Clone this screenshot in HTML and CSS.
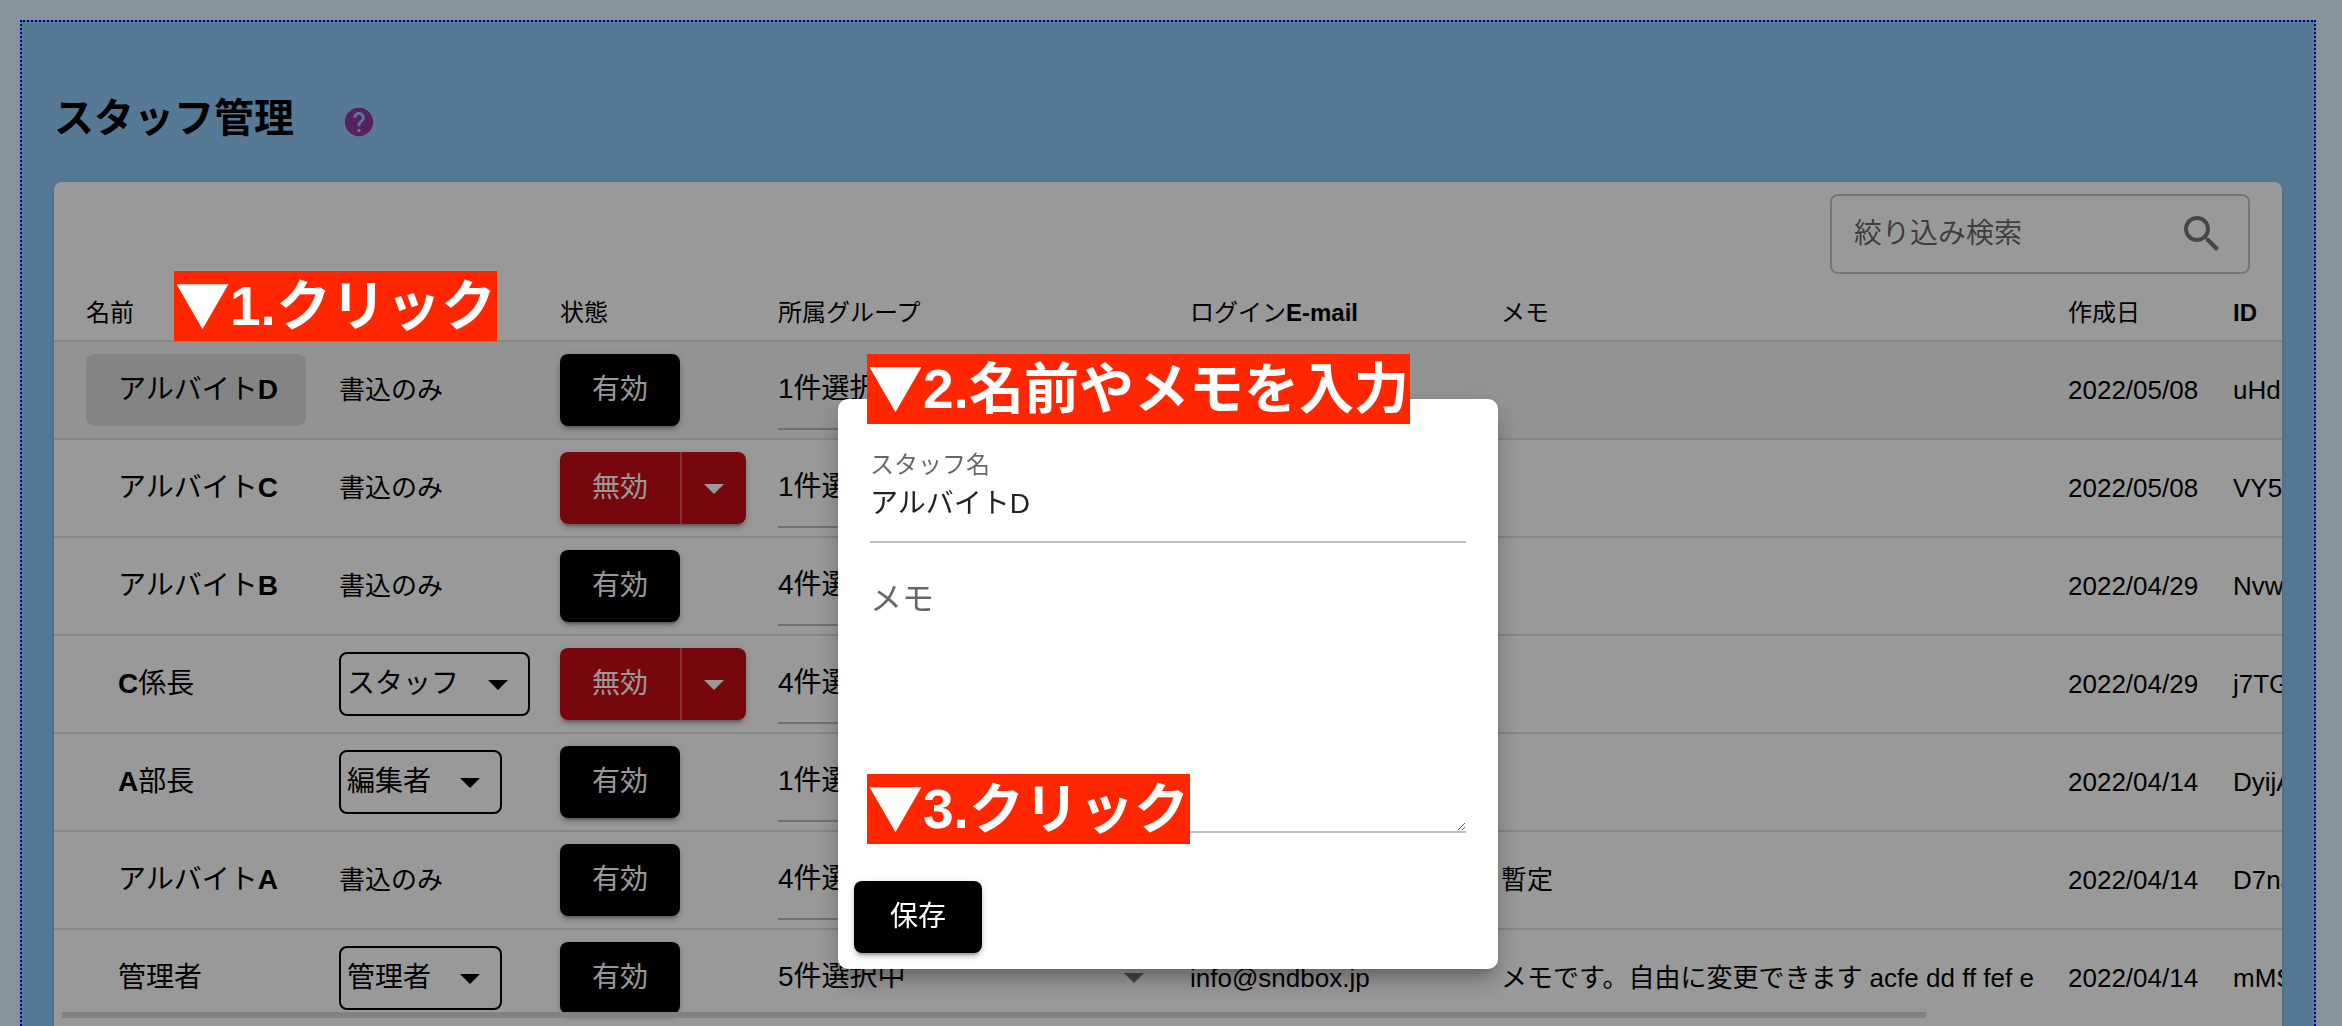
FILE: index.html
```html
<!DOCTYPE html>
<html lang="ja">
<head>
<meta charset="utf-8">
<title>スタッフ管理</title>
<link rel="stylesheet" href="styles.css">
</head>
<body>
<div class="app">
  <main class="frame">
    <header class="page-head">
      <h1 class="page-title">スタッフ管理</h1>
      <a class="help" href="#help" aria-label="ヘルプ">
        <svg class="help-icon" viewBox="0 0 24 24"><path d="M12 2C6.48 2 2 6.48 2 12s4.48 10 10 10 10-4.48 10-10S17.52 2 12 2zm1 17h-2v-2h2v2zm2.07-7.75-.9.92C13.45 12.9 13 13.5 13 15h-2v-.5c0-1.1.45-2.1 1.17-2.83l1.24-1.26c.37-.36.59-.86.59-1.41 0-1.1-.9-2-2-2s-2 .9-2 2H8c0-2.21 1.79-4 4-4s4 1.79 4 4c0 .88-.36 1.68-.93 2.25z"/></svg>
      </a>
    </header>

    <section class="paper">
      <div class="toolbar">
        <label class="search">
          <input class="search-input" type="text" placeholder="絞り込み検索" aria-label="絞り込み検索">
          <svg class="icon" viewBox="0 0 24 24"><path d="M15.5 14h-.79l-.28-.27C15.41 12.59 16 11.11 16 9.5 16 5.91 13.09 3 9.5 3S3 5.91 3 9.5 5.91 16 9.5 16c1.61 0 3.09-.59 4.23-1.57l.27.28v.79l5 4.99L20.49 19l-4.99-5zm-6 0C7.01 14 5 11.99 5 9.5S7.01 5 9.5 5 14 7.01 14 9.5 11.99 14 9.5 14z"/></svg>
        </label>
      </div>

      <table class="staff">
        <colgroup>
          <col class="c-name"><col class="c-role"><col class="c-state"><col class="c-group"><col class="c-mail"><col class="c-memo"><col class="c-date"><col class="c-id">
        </colgroup>
        <thead>
          <tr><th>名前</th><th></th><th>状態</th><th>所属グループ</th><th>ログイン<b>E-mail</b></th><th>メモ</th><th>作成日</th><th><b>ID</b></th></tr>
        </thead>
        <tbody>
          <tr class="is-hover">
            <td><button class="name is-active">アルバイト<b>D</b></button></td>
            <td>書込のみ</td>
            <td><div class="state"><button class="btn">有効</button></div></td>
            <td><div class="pick group"><select aria-label="所属グループ"><option>1件選択中</option></select><svg class="icon" viewBox="0 0 24 24"><path d="M7 10l5 5 5-5z"/></svg></div></td>
            <td></td><td></td><td>2022/05/08</td><td>uHd</td>
          </tr>
          <tr>
            <td><button class="name">アルバイト<b>C</b></button></td>
            <td>書込のみ</td>
            <td><div class="state"><button class="btn off">無効</button><button class="btn off more" aria-label="メニュー"><svg class="icon" viewBox="0 0 24 24"><path d="M7 10l5 5 5-5z"/></svg></button></div></td>
            <td><div class="pick group"><select aria-label="所属グループ"><option>1件選択中</option></select><svg class="icon" viewBox="0 0 24 24"><path d="M7 10l5 5 5-5z"/></svg></div></td>
            <td></td><td></td><td>2022/05/08</td><td>VY5</td>
          </tr>
          <tr>
            <td><button class="name">アルバイト<b>B</b></button></td>
            <td>書込のみ</td>
            <td><div class="state"><button class="btn">有効</button></div></td>
            <td><div class="pick group"><select aria-label="所属グループ"><option>4件選択中</option></select><svg class="icon" viewBox="0 0 24 24"><path d="M7 10l5 5 5-5z"/></svg></div></td>
            <td></td><td></td><td>2022/04/29</td><td>Nvw</td>
          </tr>
          <tr>
            <td><button class="name"><b>C</b>係長</button></td>
            <td><div class="pick role"><select aria-label="権限"><option>スタッフ</option></select><svg class="icon" viewBox="0 0 24 24"><path d="M7 10l5 5 5-5z"/></svg></div></td>
            <td><div class="state"><button class="btn off">無効</button><button class="btn off more" aria-label="メニュー"><svg class="icon" viewBox="0 0 24 24"><path d="M7 10l5 5 5-5z"/></svg></button></div></td>
            <td><div class="pick group"><select aria-label="所属グループ"><option>4件選択中</option></select><svg class="icon" viewBox="0 0 24 24"><path d="M7 10l5 5 5-5z"/></svg></div></td>
            <td></td><td></td><td>2022/04/29</td><td>j7TG</td>
          </tr>
          <tr>
            <td><button class="name"><b>A</b>部長</button></td>
            <td><div class="pick role"><select aria-label="権限"><option>編集者</option></select><svg class="icon" viewBox="0 0 24 24"><path d="M7 10l5 5 5-5z"/></svg></div></td>
            <td><div class="state"><button class="btn">有効</button></div></td>
            <td><div class="pick group"><select aria-label="所属グループ"><option>1件選択中</option></select><svg class="icon" viewBox="0 0 24 24"><path d="M7 10l5 5 5-5z"/></svg></div></td>
            <td></td><td></td><td>2022/04/14</td><td>DyijA</td>
          </tr>
          <tr>
            <td><button class="name">アルバイト<b>A</b></button></td>
            <td>書込のみ</td>
            <td><div class="state"><button class="btn">有効</button></div></td>
            <td><div class="pick group"><select aria-label="所属グループ"><option>4件選択中</option></select><svg class="icon" viewBox="0 0 24 24"><path d="M7 10l5 5 5-5z"/></svg></div></td>
            <td></td><td>暫定</td><td>2022/04/14</td><td>D7nJ</td>
          </tr>
          <tr>
            <td><button class="name">管理者</button></td>
            <td><div class="pick role"><select aria-label="権限"><option>管理者</option></select><svg class="icon" viewBox="0 0 24 24"><path d="M7 10l5 5 5-5z"/></svg></div></td>
            <td><div class="state"><button class="btn">有効</button></div></td>
            <td><div class="pick group"><select aria-label="所属グループ"><option>5件選択中</option></select><svg class="icon" viewBox="0 0 24 24"><path d="M7 10l5 5 5-5z"/></svg></div></td>
            <td>info@sndbox.jp</td><td>メモです。自由に変更できます acfe dd ff fef e</td><td>2022/04/14</td><td>mMS</td>
          </tr>
        </tbody>
      </table>
      <div class="scrollbar"></div>
    </section>
  </main>
</div>

<div class="backdrop">
  <form class="dialog" role="dialog" aria-label="スタッフ編集">
    <div class="field">
      <label class="field-label" for="staff-name">スタッフ名</label>
      <input class="field-input" id="staff-name" type="text" value="アルバイトD">
    </div>
    <textarea class="field-memo" placeholder="メモ" aria-label="メモ"></textarea>
    <div class="actions"><button class="btn save" type="button">保存</button></div>
    <strong class="note note-2"><span class="mark">▼</span>2.名前やメモを入力</strong>
    <strong class="note note-3"><span class="mark">▼</span>3.クリック</strong>
  </form>
  <strong class="note note-1"><span class="mark">▼</span>1.クリック</strong>
</div>
</body>
</html>
```

FILE: styles.css
```css
* { box-sizing: border-box; }

body {
  margin: 0;
  background: #e1f5fe;
  color: #000;
  font-family: "Liberation Sans", "Noto Sans CJK JP", sans-serif;
  font-size: 26px;
  line-height: 36px;
  font-weight: 400;
}

button, input, select, textarea { font: inherit; color: inherit; }
button { border: 0; cursor: pointer; }
b { font-weight: 700; }

.app { height: 100vh; overflow: hidden; }

.frame {
  margin: 20px 26px 0 20px;
  padding: 66px 32px 32px;
  border: 2px dotted #00f;
  background: #90caf9;
}

/* heading */
.page-head { display: flex; align-items: center; gap: 48px; height: 60px; margin-bottom: 34px; }
.page-title { margin: 0; font-size: 40px; line-height: 60px; font-weight: 700; }
.help { display: flex; padding-top: 8px; color: #8e3a9e; }
.help-icon { width: 34px; height: 34px; fill: currentColor; }

/* staff list */
.paper {
  position: relative;
  overflow: hidden;
  padding-bottom: 32px;
  border-radius: 8px;
  background: #fff;
  box-shadow: 0 4px 2px -2px rgba(0,0,0,.2), 0 2px 2px rgba(0,0,0,.14), 0 2px 6px rgba(0,0,0,.12);
}
.toolbar { display: flex; justify-content: flex-end; padding: 12px 32px; }
.search {
  display: flex; align-items: center;
  width: 420px; height: 80px; padding: 0 22px;
  border: 2px solid rgba(0,0,0,.23); border-radius: 8px;
}
.search-input { flex: 1; min-width: 0; padding: 0; border: 0; outline: 0; background: none; font-size: 28px; }
.search-input::placeholder { color: rgba(0,0,0,.6); opacity: 1; }
.icon { width: 48px; height: 48px; flex: none; fill: rgba(0,0,0,.54); }

.staff { width: 2400px; table-layout: fixed; border-collapse: separate; border-spacing: 0; }
.c-name { width: 269px; }
.c-role { width: 221px; }
.c-state { width: 218px; }
.c-group { width: 412px; }
.c-mail { width: 311px; }
.c-memo { width: 567px; }
.c-date { width: 165px; }
.staff th, .staff td { padding: 0 16px; border-bottom: 2px solid #e0e0e0; text-align: left; white-space: nowrap; }
.staff th:first-child, .staff td:first-child { padding-left: 32px; }
.staff th { height: 56px; font-size: 24px; font-weight: 400; }
.staff td { height: 98px; }
.is-hover { background: rgba(0,0,0,.04); }

.name { height: 72px; padding: 0 28px 0 32px; border-radius: 8px; background: none; font-size: 28px; }
.name.is-active { background: rgba(0,0,0,.1); }

.btn {
  height: 72px; padding: 0 32px; border-radius: 8px;
  background: #000; color: #fff; font-size: 28px;
}
.state { display: flex; width: max-content; border-radius: 8px; }
.state, .save { box-shadow: 0 6px 2px -4px rgba(0,0,0,.2), 0 4px 4px rgba(0,0,0,.14), 0 2px 10px rgba(0,0,0,.12); }
.off { background: #c50d17; }
.off:not(.more) { border-right: 2px solid rgba(255,255,255,.3); border-radius: 8px 0 0 8px; }
.more { display: flex; align-items: center; justify-content: center; width: 64px; padding: 0; border-radius: 0 8px 8px 0; }
.more .icon { fill: #fff; }

.pick { display: grid; align-items: center; font-size: 28px; }
.pick select, .pick .icon { grid-area: 1 / 1; }
.pick select { appearance: none; width: 100%; height: 100%; border: 0; outline: 0; background: none; }
.pick .icon { justify-self: end; pointer-events: none; }
.role { width: max-content; height: 64px; border: 2px solid #000; border-radius: 8px; }
.role select { padding: 0 68px 0 6px; }
.role .icon { margin-right: 6px; fill: #000; }
.group { width: 380px; height: 80px; border-bottom: 2px solid rgba(0,0,0,.25); }
.group select { padding: 0; }

.scrollbar { position: absolute; left: 8px; top: 830px; width: calc(84% - 8px); height: 6px; background: #d8d8d8; }

/* dialog */
.backdrop {
  position: fixed; inset: 0;
  display: flex; justify-content: center; align-items: flex-start;
  padding: 399px 6px 0 0;
  background: rgba(0,0,0,.4);
}
.dialog {
  position: relative;
  display: flex; flex-direction: column;
  width: 660px; padding: 48px 32px 16px;
  border-radius: 10px;
  background: #fff;
  box-shadow: 0 10px 14px -6px rgba(0,0,0,.2), 0 16px 24px rgba(0,0,0,.14), 0 6px 28px rgba(0,0,0,.12);
}
.field { display: flex; flex-direction: column; border-bottom: 2px solid #bfbfbf; }
.field-label { color: rgba(0,0,0,.6); font-size: 24px; line-height: 36px; }
.field-input { height: 58px; padding: 0 0 22px; border: 0; outline: 0; background: none; color: #222; font-size: 28px; }
.field-memo {
  height: 254px; margin-top: 36px; padding: 0; border: 0; border-bottom: 2px solid #bfbfbf; outline: 0;
  font-size: 32px; line-height: 40px; resize: vertical;
}
.field-memo::placeholder { color: rgba(0,0,0,.6); opacity: 1; }
.actions { display: flex; margin: 48px -16px 0; }
.save { padding: 0 36px; }

/* step captions */
.note {
  position: absolute;
  padding: 0 1px;
  background: #ff2600; color: #fff;
  font-size: 55px; line-height: 70px; font-weight: 700; white-space: nowrap;
}
.mark { font-family: "Noto Sans CJK JP", sans-serif; line-height: 1; }
.note-1 { left: 174px; top: 271px; }
.note-2 { left: 29px; top: -45px; }
.note-3 { left: 29px; top: 375px; }
```
